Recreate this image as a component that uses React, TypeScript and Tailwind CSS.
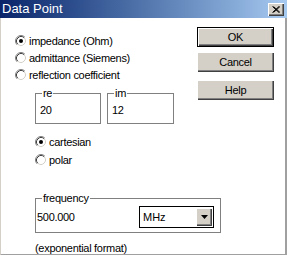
import React from "react";

const font = { fontFamily: '"Liberation Sans", Arial, sans-serif' };

function Radio({ checked }: { checked?: boolean }) {
  return (
    <svg width="12" height="12" viewBox="0 0 12 12" className="shrink-0">
      <circle cx="6" cy="6" r="5" fill="#ffffff" />
      <path d="M 2.11 9.89 A 5.5 5.5 0 0 1 9.89 2.11" fill="none" stroke="#808080" strokeWidth="1" />
      <path d="M 9.89 2.11 A 5.5 5.5 0 0 1 2.11 9.89" fill="none" stroke="#ffffff" strokeWidth="1" />
      <path d="M 2.82 9.18 A 4.5 4.5 0 0 1 9.18 2.82" fill="none" stroke="#404040" strokeWidth="1" />
      <path d="M 9.18 2.82 A 4.5 4.5 0 0 1 2.82 9.18" fill="none" stroke="#d4d0c8" strokeWidth="1" />
      {checked && <circle cx="6" cy="6" r="2" fill="#000000" />}
    </svg>
  );
}

function RadioRow({ label, checked, h }: { label: string; checked?: boolean; h: string }) {
  return (
    <div className={`flex items-center gap-[2px] ${h}`}>
      <Radio checked={checked} />
      <span className="leading-[12px] whitespace-nowrap">{label}</span>
    </div>
  );
}

function Button({ label, def }: { label: string; def?: boolean }) {
  return def ? (
    <div className="h-[20px] w-[77px] border border-black bg-[#d4d0c8] shadow-[inset_1px_1px_#ffffff,inset_-1px_-1px_#404040,inset_-2px_-2px_#808080] flex items-center justify-center leading-[12px]">
      {label}
    </div>
  ) : (
    <div className="h-[20px] w-[77px] bg-[#d4d0c8] shadow-[inset_1px_1px_#ffffff,inset_-1px_-1px_#404040,inset_-2px_-2px_#808080] flex items-center justify-center leading-[12px]">
      {label}
    </div>
  );
}

export default function App() {
  return (
    <div
      className="w-[287px] h-[255px] bg-white flex flex-col text-[11px] tracking-[-0.3px] text-black overflow-hidden"
      style={font}
    >
      {/* Title bar */}
      <div className="h-[18px] shrink-0 bg-gradient-to-r from-[#0a246a] to-[#a6caf0] flex items-center pl-[2px] pr-[3px]">
        <span className="text-white text-[13px] tracking-normal leading-[16px] flex-1">Data Point</span>
        <div className="w-[16px] h-[13px] bg-[#d4d0c8] shadow-[inset_1px_1px_#ffffff,inset_-1px_-1px_#404040,inset_-2px_-2px_#808080] flex items-center justify-center">
          <svg width="8" height="7" viewBox="0 0 8 7">
            <path d="M0.5 0.5 L7 6.5 M1.5 0.5 L8 6.5 M7 0.5 L0.5 6.5 M8 0.5 L1.5 6.5" stroke="#000" strokeWidth="1" />
          </svg>
        </div>
      </div>

      {/* Body */}
      <div className="flex-1 flex border-l border-l-[#d4d0c8] border-r-2 border-r-[#a0a0a0] border-b-2 border-b-[#a0a0a0]">
        {/* Left column */}
        <div className="flex-1 min-w-0 flex flex-col pl-[14px] pt-[14px]">
          <RadioRow label="impedance (Ohm)" checked h="h-[17px]" />
          <RadioRow label="admittance (Siemens)" h="h-[17px]" />
          <RadioRow label="reflection coefficient" h="h-[17px]" />

          <div className="flex flex-col pl-[20px]">
            <div className="flex gap-[6px] mt-[10px]">
              <div className="relative shrink-0 w-[66px] h-[31px] border border-[#808080] pl-[4px] pt-[10px] leading-[12px]">
                <span className="absolute -top-[7px] left-[6px] bg-white px-[1px] leading-[12px]">re</span>
                20
              </div>
              <div className="relative shrink-0 w-[67px] h-[31px] border border-[#808080] pl-[4px] pt-[10px] leading-[12px]">
                <span className="absolute -top-[7px] left-[6px] bg-white px-[1px] leading-[12px]">im</span>
                12
              </div>
            </div>

            <div className="mt-[9px]">
              <RadioRow label="cartesian" checked h="h-[18px]" />
              <RadioRow label="polar" h="h-[18px]" />
            </div>

            <div className="relative shrink-0 mt-[29px] w-[186px] h-[35px] border border-[#808080] flex items-start pl-[1px]">
              <span className="absolute -top-[7px] left-[6px] bg-white px-[1px] leading-[12px]">frequency</span>
              <span className="w-[102px] shrink-0 mt-[12px] leading-[12px]">500.000</span>
              <div className="mt-[7px] shrink-0 w-[75px] h-[22px] border border-black bg-white flex items-center">
                <span className="flex-1 pl-[3px] leading-[12px] tracking-normal">MHz</span>
                <div className="w-[16px] h-[18px] mr-[1px] bg-[#d4d0c8] shadow-[inset_1px_1px_#ffffff,inset_-1px_-1px_#404040,inset_-2px_-2px_#808080] flex items-center justify-center">
                  <svg width="7" height="4" viewBox="0 0 7 4">
                    <path d="M0 0 H7 L3.5 4 Z" fill="#000" />
                  </svg>
                </div>
              </div>
            </div>

            <div className="mt-[9px] leading-[12px] whitespace-nowrap">(exponential format)</div>
          </div>
        </div>

        {/* Right column */}
        <div className="w-[77px] shrink-0 mr-[11px] flex flex-col pt-[9px]">
          <Button label="OK" def />
          <div className="h-[5px]" />
          <Button label="Cancel" />
          <div className="h-[8px]" />
          <Button label="Help" />
        </div>
      </div>
    </div>
  );
}
